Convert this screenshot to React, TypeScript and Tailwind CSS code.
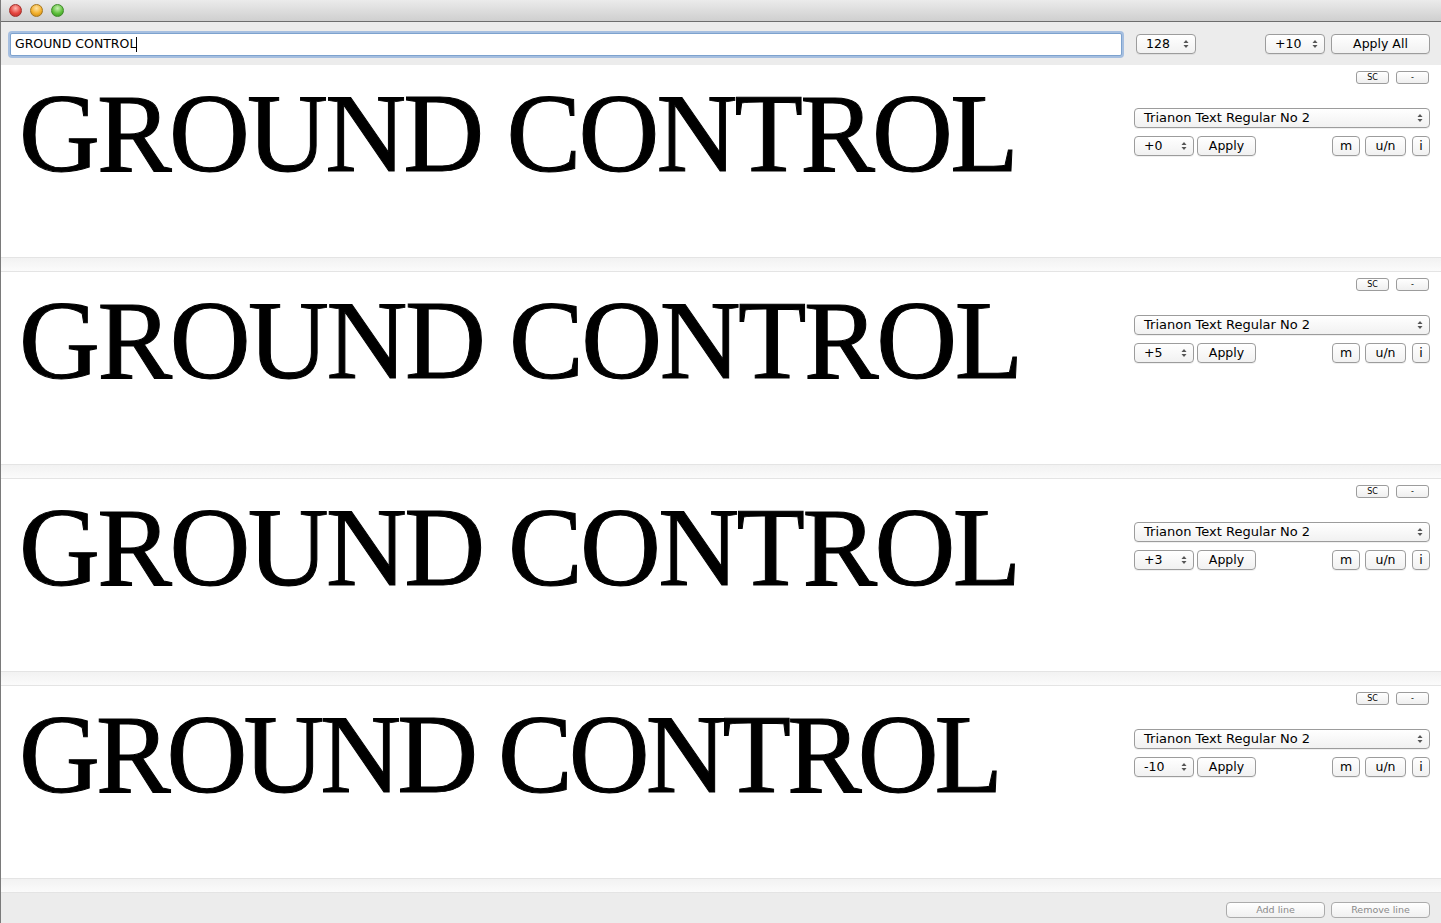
import React from "react";

const ui = "font-['DejaVu_Sans','Liberation_Sans',sans-serif]";

const Arrows = () => (
  <svg width="6" height="10" viewBox="0 0 6 10" className="shrink-0">
    <path d="M3 1 L5.5 4 L0.5 4 Z" fill="#555" />
    <path d="M3 9 L5.5 6 L0.5 6 Z" fill="#555" />
  </svg>
);

const Stepper = ({ value, className = "" }: { value: string; className?: string }) => (
  <div
    className={`flex items-center justify-between h-[20px] w-[60px] pl-[9px] pr-[6px] rounded-[4px] border border-[#9c9c9c] bg-gradient-to-b from-white to-[#f1f1f1] shadow-[0_1px_0_rgba(0,0,0,0.06)] text-[12.5px] text-black ${className}`}
  >
    <span>{value}</span>
    <Arrows />
  </div>
);

const Btn = ({
  children,
  className = "",
}: {
  children: React.ReactNode;
  className?: string;
}) => (
  <div
    className={`flex items-center justify-center h-[20px] rounded-[4px] border border-[#9c9c9c] bg-gradient-to-b from-white to-[#f1f1f1] shadow-[0_1px_0_rgba(0,0,0,0.06)] text-[12.5px] text-black ${className}`}
  >
    {children}
  </div>
);

const TinyBtn = ({ children }: { children: React.ReactNode }) => (
  <div className="flex items-center justify-center h-[13px] w-[33px] rounded-[3px] border border-[#9c9c9c] bg-gradient-to-b from-white to-[#efefef] text-[8px] leading-none text-black">
    {children}
  </div>
);

const rows = [
  { tracking: "tracking-[-2.8px]", value: "+0" },
  { tracking: "tracking-[-2.45px]", value: "+5" },
  { tracking: "tracking-[-2.6px]", value: "+3" },
  { tracking: "tracking-[-4px]", value: "-10" },
];

const Row = ({ tracking, value }: { tracking: string; value: string }) => (
  <div className="flex h-[192px] bg-white">
    <div className="flex-1 min-w-0 pl-[18px] pt-[12px]">
      <div
        className={`font-['Liberation_Serif','DejaVu_Serif',serif] text-[112px] leading-none text-black whitespace-nowrap [-webkit-text-stroke:1px_black] ${tracking}`}
      >
        GROUND CONTROL
      </div>
    </div>
    <div className="w-[296px] mr-[11px] flex flex-col pt-[6px]">
      <div className="flex justify-end gap-[7px] pr-[1px]">
        <TinyBtn>SC</TinyBtn>
        <TinyBtn>-</TinyBtn>
      </div>
      <div className="mt-[24px] flex items-center justify-between h-[20px] pl-[9px] pr-[6px] rounded-[4px] border border-[#9c9c9c] bg-gradient-to-b from-white to-[#f1f1f1] shadow-[0_1px_0_rgba(0,0,0,0.06)] text-[13px]">
        <span>Trianon Text Regular No 2</span>
        <Arrows />
      </div>
      <div className="mt-[8px] flex items-center">
        <Stepper value={value} />
        <Btn className="ml-[3px] w-[59px]">Apply</Btn>
        <div className="flex-1" />
        <Btn className="w-[28px]">m</Btn>
        <Btn className="ml-[5px] w-[41px]">u/n</Btn>
        <Btn className="ml-[6px] w-[18px]">i</Btn>
      </div>
    </div>
  </div>
);

const Separator = () => (
  <div className="h-[15px] border-y border-[#e4e4e4] bg-gradient-to-b from-[#f2f2f2] to-[#fbfbfb]" />
);

export default function App() {
  return (
    <div className={`w-[1441px] h-[923px] flex flex-col bg-[#ececec] border-l border-[#7a7a7a] overflow-hidden ${ui}`}>
      {/* title bar */}
      <div className="h-[22px] shrink-0 flex items-center gap-[8px] pl-[8px] bg-gradient-to-b from-[#ebebeb] to-[#cfcfcf] border-b border-[#6d6d6d]">
        <div className="w-[13px] h-[13px] rounded-full border border-[#a3302b] bg-[radial-gradient(circle_at_50%_30%,#ffb8b0,#e5463f_55%,#b42b26)]" />
        <div className="w-[13px] h-[13px] rounded-full border border-[#a5751c] bg-[radial-gradient(circle_at_50%_30%,#ffe3a6,#f3b12c_55%,#c07e12)]" />
        <div className="w-[13px] h-[13px] rounded-full border border-[#3f8a2a] bg-[radial-gradient(circle_at_50%_30%,#c9f0b4,#5fc13d_55%,#2f8b1c)]" />
      </div>

      {/* toolbar */}
      <div className="h-[43px] shrink-0 flex items-center pl-[9px] pr-[11px] pt-[1px]">
        <div className="w-[1112px] h-[23px] rounded-[2px] border border-[#7da2ce] bg-white shadow-[0_0_0_2px_rgba(110,155,215,0.55)] flex items-center pl-[4px] text-[12.5px] text-black">
          <span>GROUND CONTROL</span>
          <span className="w-px h-[15px] bg-black" />
        </div>
        <Stepper value="128" className="ml-[14px]" />
        <div className="flex-1" />
        <Stepper value="+10" />
        <Btn className="ml-[6px] w-[99px]">Apply All</Btn>
      </div>

      {rows.map((r, i) => (
        <React.Fragment key={i}>
          <Row tracking={r.tracking} value={r.value} />
          <Separator />
        </React.Fragment>
      ))}

      {/* bottom bar */}
      <div className="flex-1 flex items-center justify-end pr-[11px] pt-[4px] gap-[6px]">
        <div className="flex items-center justify-center h-[16px] w-[99px] rounded-[4px] border border-[#ababab] bg-gradient-to-b from-white to-[#f0f0f0] text-[9.5px] text-[#8a8a8a]">
          Add line
        </div>
        <div className="flex items-center justify-center h-[16px] w-[99px] rounded-[4px] border border-[#ababab] bg-gradient-to-b from-white to-[#f0f0f0] text-[9.5px] text-[#8a8a8a]">
          Remove line
        </div>
      </div>
    </div>
  );
}
